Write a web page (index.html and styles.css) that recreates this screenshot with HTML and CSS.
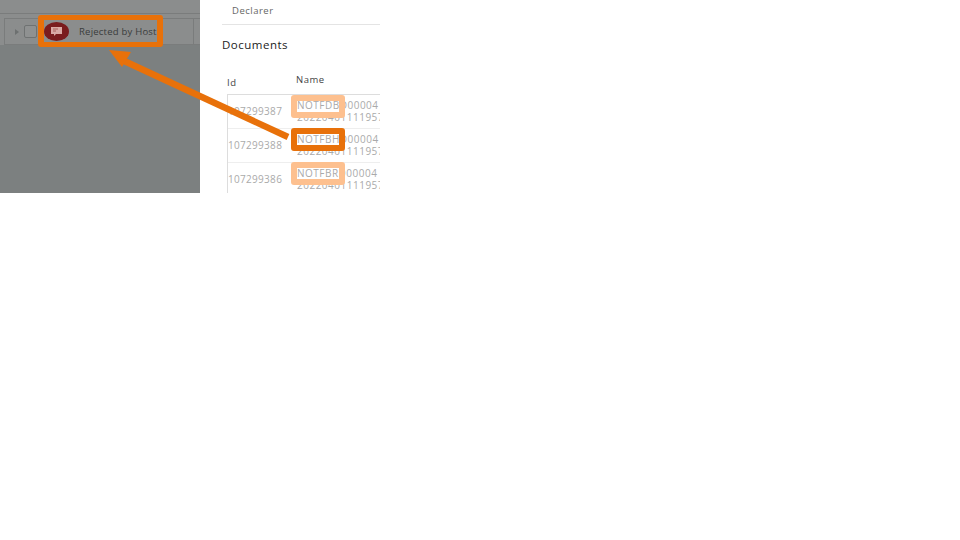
FILE: index.html
```html
<!DOCTYPE html>
<html lang="en">
<head>
  <meta charset="UTF-8">
  <title>Rejected by Host</title>
  <link rel="stylesheet" href="styles.css">
</head>
<body>

  <div class="stage">
    <div class="list-panel">
      <div class="list-top"></div>
      <div class="list-row">
        <span class="chevron"></span>
        <span class="checkbox"></span>
        <span class="status-icon">
          <svg width="13" height="11" viewBox="0 0 13 11">
            <path d="M1 1h11v7H6L4 10V8H1z" fill="#d9a9a5"/>
            <path d="M3 3h5M3 5h3" stroke="#a8605c" stroke-width="1"/>
          </svg>
        </span>
        <span class="status-text">Rejected by Host</span>
        <span class="row-end"></span>
      </div>
    </div>

    <div class="detail-panel">
      <div class="field-row">Declarer</div>
      <h2>Documents</h2>
      <div class="doc-head">
        <span class="col-id">Id</span>
        <span class="col-name">Name</span>
      </div>
      <div class="doc-table">
        <div class="doc-row">
          <span class="col-id">107299387</span>
          <span class="col-name">NOTFDBD00004<br>20220401111957</span>
        </div>
        <div class="doc-row">
          <span class="col-id">107299388</span>
          <span class="col-name">NOTFBHD00004<br>20220401111957</span>
        </div>
        <div class="doc-row">
          <span class="col-id">107299386</span>
          <span class="col-name">NOTFBRD00004<br>20220401111957</span>
        </div>
      </div>
    </div>

    <!-- annotations on top of the screenshot -->
    <div class="mark mark-status"></div>
    <div class="mark mark-light mark-1"></div>
    <div class="mark mark-2"></div>
    <div class="mark mark-light mark-3"></div>
    <svg class="arrow" width="380" height="193" viewBox="0 0 380 193">
      <path d="M288 137L122 60" stroke="#e8710a" stroke-width="6.5"/>
      <path d="M109 50L131 52L122 67z" fill="#e8710a"/>
    </svg>
  </div>

</body>
</html>
```

FILE: styles.css
```css
body {
  margin: 0;
  background-color: #fff;
  font-family: "Open Sans", sans-serif;
}

.stage {
  position: relative;
  display: flex;
  width: 380px;
  height: 193px;
  overflow: hidden;
}

.list-panel {
  width: 200px;
  flex-shrink: 0;
  background-color: #7c8080;
  box-shadow: inset 0 45px 0 #8b8d8d;
}

.list-top {
  height: 14px;
  margin-bottom: 4px;
  box-sizing: border-box;
  border-bottom: 1px solid #7a7c7c;
}

.list-row {
  display: flex;
  align-items: center;
  box-sizing: border-box;
  height: 27px;
  margin-left: 4px;
  padding-left: 10px;
  background-color: #8b8d8d;
  border: 1px solid #7a7c7c;
  border-right: 0;
}

.chevron {
  width: 0;
  height: 0;
  border-left: 4px solid #6d7070;
  border-top: 3px solid transparent;
  border-bottom: 3px solid transparent;
}

.checkbox {
  box-sizing: border-box;
  width: 13px;
  height: 13px;
  margin-left: 5px;
  background-color: #8f9191;
  border: 1px solid #6f7272;
  border-radius: 2px;
}

.status-icon {
  display: flex;
  align-items: center;
  justify-content: center;
  width: 25px;
  height: 19px;
  margin-left: 7px;
  background-color: #7a1c1e;
  border-radius: 50%;
}

.status-text {
  width: 114px;
  margin-left: 10px;
  font-size: 9.5px;
  letter-spacing: 0.22px;
  color: #3a3c3c;
  white-space: nowrap;
}

.row-end {
  height: 100%;
  border-left: 1px solid #7a7c7c;
}

.detail-panel {
  flex: 1;
  min-width: 0;
  padding-left: 22px;
  color: #333;
}

.field-row {
  height: 25px;
  padding: 4px 0 0 10px;
  box-sizing: border-box;
  border-bottom: 1px solid #e4e4e4;
  font-size: 9.5px;
  line-height: 13px;
  letter-spacing: 0.5px;
  color: #666;
}

h2 {
  margin: 12px 0 0;
  font-size: 11.5px;
  line-height: 16px;
  font-weight: 400;
  letter-spacing: 0.5px;
  color: #222;
}

.doc-head {
  display: flex;
  height: 21px;
  margin: 20px 0 0 5px;
  font-size: 9.5px;
  letter-spacing: 0.5px;
  color: #444;
}

.col-id {
  flex-shrink: 0;
}

.doc-head .col-id {
  width: 69px;
  padding-top: 3px;
}

.doc-table {
  margin-left: 5px;
  border-top: 1px solid #ddd;
  border-left: 1px solid #ddd;
}

.doc-row {
  display: flex;
  height: 33px;
  border-bottom: 1px solid #eee;
  font-size: 10px;
  letter-spacing: 0.5px;
  color: #aaa;
  white-space: nowrap;
}

.doc-row .col-id {
  width: 69px;
  line-height: 33px;
  letter-spacing: 0.3px;
}

.doc-row .col-name {
  padding-top: 4px;
  line-height: 12px;
}

.mark {
  position: absolute;
  box-sizing: border-box;
  border: 6px solid #e8710a;
  border-radius: 3px;
}

.mark-light {
  border-color: #fdc08f;
}

.mark-status {
  left: 38px;
  top: 15px;
  width: 125px;
  height: 32px;
  border-width: 5px 6px;
}

.mark-1,
.mark-2,
.mark-3 {
  left: 291px;
  width: 54px;
  height: 23px;
}

.mark-1 {
  top: 95px;
}

.mark-2 {
  top: 128px;
}

.mark-3 {
  top: 162px;
}

.arrow {
  position: absolute;
  left: 0;
  top: 0;
}
```
